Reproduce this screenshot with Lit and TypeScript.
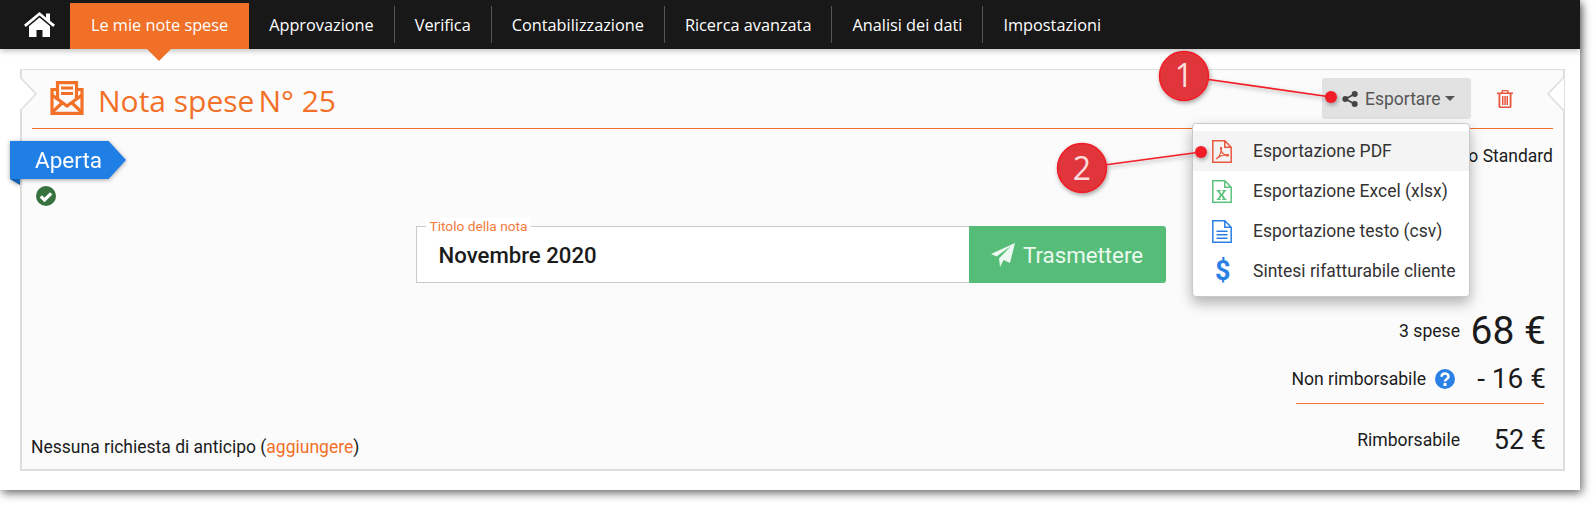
import { LitElement, html, css, svg } from 'lit';
import { customElement } from 'lit/decorators.js';

const tabs = ['Approvazione', 'Verifica', 'Contabilizzazione', 'Ricerca avanzata', 'Analisi dei dati', 'Impostazioni'];

const homeIcon = html`<svg width="31" height="26" viewBox="0 0 31 26">
  <path fill="#fff" d="M15.5 5.5 5 14.2V25h7.5v-7h6v7H26V14.2z" />
  <path fill="#fff" d="M15.5 0 0 12.8l1.8 2.1L15.5 3.6l13.700 11.300 1.800-2.100L26 8.700V1.500h-4v3.900z" />
</svg>`;

const noteIcon = html`<svg width="34" height="34" viewBox="0 0 34 34">
  <g fill="none" stroke="#f27027" stroke-width="3.200">
    <path d="M7.500 19V1.600h19V19" />
    <path d="M7 8.500H2V32.400H32V8.500H27" />
    <path d="M2 14 17 25 32 14" />
    <path d="M2 31.500 12.500 21.500M32 31.500 21.500 21.500" />
  </g>
  <path fill="#f27027" d="M11 5.500h12v3H11zM11 11h12v3H11z" />
</svg>`;

const fileIcon = (color: string, body: unknown) => html`<svg width="20" height="23" viewBox="0 0 20 23">
  <path fill="none" stroke=${color} stroke-width="1.500" d="M.8.8h12l6.400 6.400v15H.8zM12.800.8v6.400h6.400" />
  ${body}
</svg>`;

const pdfIcon = fileIcon('#e9573f', svg`<path fill="none" stroke="#e9573f" stroke-width="1.200"
  d="M4 19c3-1.500 5-6 5.500-10.500 .2-1.500-1-1.500-1-.2 0 3 3 7 7 7.500 1.500 .2 1.500-1.200 0-1.200-3.500 0-8 1.500-11.500 4.400z" />`);
const excelIcon = fileIcon('#5cc27d', svg`<path fill="#5cc27d" d="M4.500 10h4.300v1.300H7.700l1.800 2.700 1.800-2.700h-1V10h4v1.300h-1L11 15l2.500 3.700h1V20h-4.300v-1.300h1L9.500 16l-1.800 2.700h1V20h-4v-1.300h1L8 15l-2.500-3.700h-1z" />`);
const textIcon = fileIcon('#2a80e4', svg`<path fill="#2a80e4" d="M4.500 10.500h11v1.500h-11zM4.500 14h11v1.500h-11zM4.500 17.500h11V19h-11z" />`);

const shareIcon = html`<svg width="16" height="16" viewBox="0 0 16 16">
  <path fill="none" stroke="#444" stroke-width="1.800" d="M3.500 8 12.500 3M3.500 8l9 5" />
  <circle cx="3.300" cy="8" r="3" fill="#444" />
  <circle cx="12.700" cy="3" r="3" fill="#444" />
  <circle cx="12.700" cy="13" r="3" fill="#444" />
</svg>`;

const trashIcon = html`<svg width="16" height="18" viewBox="0 0 16 18">
  <path fill="#e8553a" d="M5 0h6l1 2.500h4V4h-1.500v12.500q0 1.500-1.500 1.500H3q-1.500 0-1.500-1.500V4H0V2.500h4zM6 1.300l-.5 1.200h5L10 1.300zM3.300 4v12.500h9.400V4zM5 6h1.500v9H5zM7.300 6h1.500v9H7.300zM9.500 6H11v9H9.500z" />
</svg>`;

const planeIcon = html`<svg width="24" height="24" viewBox="0 0 24 24">
  <path fill="#ecf8f0" d="M24 0 19 20l-6.500-3L9 24l-1-8.500L20 3 5.500 13.500 0 11z" />
</svg>`;

const checkIcon = html`<svg width="20" height="20" viewBox="0 0 20 20">
  <circle cx="10" cy="10" r="10" fill="#37723f" />
  <path fill="none" stroke="#fff" stroke-width="3.200" d="M4.800 10.300 8.500 14l6.700-6.700" />
</svg>`;

const helpIcon = html`<svg width="20" height="20" viewBox="0 0 20 20">
  <circle cx="10" cy="10" r="10" fill="#2a80e4" />
  <path fill="none" stroke="#fff" stroke-width="2.600" d="M6.600 7.700c0-4.300 6.900-4.300 6.900-.2 0 2.600-3.500 2.400-3.500 5" />
  <rect x="8.500" y="14" width="3" height="3" fill="#fff" />
</svg>`;

const notchLeft = html`<svg class="notch left" width="19" height="36" viewBox="0 0 19 36">
  <path fill="#fff" stroke="#dedede" stroke-width="1.500" d="M1 1 17 18 1 35" />
</svg>`;
const notchRight = html`<svg class="notch right" width="19" height="36" viewBox="0 0 19 36">
  <path fill="#fff" stroke="#dedede" stroke-width="1.500" d="M18 1 2 18 18 35" />
</svg>`;

@customElement('app-root')
export class AppRoot extends LitElement {
  render() {
    return html`
      <div class="page">
        <nav class="nav">
          <a class="home">${homeIcon}</a>
          <a class="tab active">Le mie note spese</a>
          ${tabs.map((t) => html`<a class="tab">${t}</a>`)}
        </nav>
        <main class="main">
          <section class="card">
            ${notchLeft} ${notchRight}
            <header class="head">
              <div class="title">${noteIcon}<h1>Nota spese<span class="num">N° 25</span></h1></div>
              <div class="actions">
                <button class="export">${shareIcon}<span>Esportare</span><i class="caret"></i></button>
                <span class="trash">${trashIcon}</span>
              </div>
            </header>
            <div class="ribbon"><span>Aperta</span></div>
            <span class="status">${checkIcon}</span>
            <ul class="menu">
              <li class="hover"><span class="ico">${pdfIcon}</span>Esportazione PDF</li>
              <li><span class="ico">${excelIcon}</span>Esportazione Excel (xlsx)</li>
              <li><span class="ico">${textIcon}</span>Esportazione testo (csv)</li>
              <li><span class="ico dollar">$</span>Sintesi rifatturabile cliente</li>
            </ul>
            <div class="body">
              <div class="kind">o Standard</div>
              <div class="form">
                <div class="field">
                  <label>Titolo della nota</label>
                  <span class="value">Novembre 2020</span>
                </div>
                <button class="send">${planeIcon}Trasmettere</button>
              </div>
              <div class="bottom">
                <div class="advance">Nessuna richiesta di anticipo (<a>aggiungere</a>)</div>
                <div class="totals">
                  <div class="row r1"><span>3 spese</span><b>68 €</b></div>
                  <div class="row r2"><span class="with-help">Non rimborsabile ${helpIcon}</span><b>- 16 €</b></div>
                  <div class="rule"></div>
                  <div class="row r3"><span>Rimborsabile</span><b>52 €</b></div>
                </div>
              </div>
            </div>
          </section>
        </main>
        <svg class="notes" width="1595" height="505" viewBox="0 0 1595 505">
          <defs>
            <filter id="soft" x="-30%" y="-30%" width="160%" height="160%">
              <feDropShadow dx="1" dy="2" stdDeviation="2" flood-color="#000" flood-opacity=".35" />
            </filter>
          </defs>
          <g filter="url(#soft)">
            <path d="M1184 76 1331 97M1082 168 1201 152" stroke="#f01f26" stroke-width="1.600" fill="none" />
            <circle cx="1331" cy="97" r="6" fill="#f01f26" />
            <circle cx="1201" cy="152" r="6" fill="#f01f26" />
            <circle cx="1184" cy="76" r="24.500" fill="#e0343a" stroke="#f01f26" stroke-width="1.500" />
            <circle cx="1082" cy="168" r="24.500" fill="#e0343a" stroke="#f01f26" stroke-width="1.500" />
          </g>
          <text x="1184" y="87" class="n">1</text>
          <text x="1082" y="180" class="n">2</text>
        </svg>
      </div>
    `;
  }

  static styles = css`
    :host {
      display: block;
      width: 1595px;
      height: 505px;
      overflow: hidden;
      background: #fff;
      font-family: Roboto, sans-serif;
      color: #1b1b1b;
    }
    .page {
      position: relative;
      width: 1580px;
      height: 490px;
      background: #fff;
      box-shadow: 2px 3px 9px rgba(0, 0, 0, 0.6);
      display: flex;
      flex-direction: column;
    }
    .notes {
      position: absolute;
      left: 0;
      top: 0;
      z-index: 3;
      pointer-events: none;
    }
    .n {
      font: 32px 'Open Sans', sans-serif;
      fill: #fbdcdc;
      text-anchor: middle;
    }
    .nav {
      display: flex;
      height: 49px;
      background: #181818;
      box-shadow: 0 2px 6px rgba(0, 0, 0, 0.25);
      font-family: 'Open Sans', sans-serif;
      font-size: 16.3px;
      color: #fff;
    }
    .home {
      width: 70px;
      display: flex;
      align-items: center;
      justify-content: center;
      padding-left: 9px;
      box-sizing: border-box;
    }
    .tab {
      display: flex;
      align-items: center;
      padding: 0 20px;
      margin: 6px 0;
      border-left: 1px solid #555;
    }
    .tab.active {
      position: relative;
      margin: 3px 0 0;
      padding: 0 20.500px 3px 21px;
      border: 0;
      background: #f07027;
    }
    .tab.active::after {
      content: '';
      position: absolute;
      left: 77px;
      top: 100%;
      border: 12px solid transparent;
      border-top-color: #f07027;
      border-bottom: 0;
    }
    .tab.active + .tab {
      border-left: 0;
      padding-left: 20.500px;
    }
    .main {
      flex: 1;
      display: flex;
      padding: 20px 15px 19px 20px;
      min-height: 0;
    }
    .card {
      position: relative;
      flex: 1;
      display: flex;
      flex-direction: column;
      box-sizing: border-box;
      background: #fbfbfb;
      border: 1px solid #dedede;
      border-width: 1px 2px 2px 2px;
      padding: 0 10px;
    }
    .notch {
      position: absolute;
      top: 6px;
    }
    .notch.left {
      left: -3px;
    }
    .notch.right {
      right: -2px;
    }
    .head {
      height: 58px;
      flex: none;
      display: flex;
      justify-content: space-between;
      border-bottom: 1px solid #f27027;
    }
    .title {
      display: flex;
      align-items: flex-start;
      padding: 11px 0 0 18px;
      gap: 14px;
    }
    h1 {
      margin: -2px 0 0;
      font: 400 30px/44px 'Open Sans', sans-serif;
      color: #f27027;
    }
    .num {
      margin-left: 4px;
    }
    .actions {
      display: flex;
      align-items: flex-start;
      padding-top: 8px;
    }
    .export {
      width: 149px;
      height: 41px;
      display: flex;
      align-items: center;
      gap: 7px;
      padding: 0 0 0 20px;
      border: 0;
      border-radius: 3px;
      background: #e2e2e2;
      color: #555;
      font: 17.500px Roboto, sans-serif;
    }
    .caret {
      margin-left: -2px;
      border: 5px solid transparent;
      border-top-color: #555;
      border-bottom: 0;
    }
    .trash {
      margin: 12px 40px 0 26px;
    }
    .ribbon {
      position: absolute;
      left: -12px;
      top: 71px;
      width: 116px;
      height: 38px;
      filter: drop-shadow(0 1px 2px rgba(0, 0, 0, 0.35));
    }
    .ribbon span {
      display: block;
      height: 100%;
      padding-left: 25px;
      font-size: 22.500px;
      line-height: 38px;
      color: #fff;
      background: #1f7fe5;
      clip-path: polygon(0 0, 85% 0, 100% 50%, 85% 100%, 0 100%);
    }
    .ribbon::after {
      content: '';
      position: absolute;
      left: 0;
      top: 100%;
      border-top: 6px solid #135fb0;
      border-left: 10px solid transparent;
    }
    .status {
      position: absolute;
      left: 14px;
      top: 116px;
      line-height: 0;
    }
    .menu {
      position: absolute;
      left: 1170px;
      top: 53px;
      width: 278px;
      height: 174px;
      box-sizing: border-box;
      margin: 0;
      padding: 7px 0;
      list-style: none;
      background: #fff;
      border: 1px solid #c9c9c9;
      border-radius: 4px;
      box-shadow: 0 6px 14px rgba(0, 0, 0, 0.3);
      font-size: 17.500px;
      color: #333;
      z-index: 2;
    }
    .menu li {
      display: flex;
      align-items: center;
      height: 40px;
      white-space: nowrap;
    }
    .menu li.hover {
      background: #f4f4f4;
    }
    .ico {
      display: flex;
      line-height: 0;
      width: 21px;
      margin: 0 20px 0 19px;
    }
    .dollar {
      font-size: 27px;
      font-weight: 700;
      color: #2a80e4;
      line-height: 1;
      padding-left: 3px;
      box-sizing: border-box;
    }
    .body {
      flex: 1;
      display: flex;
      flex-direction: column;
      min-height: 0;
    }
    .kind {
      margin-top: 17px;
      text-align: right;
      font-size: 17.500px;
      line-height: 20px;
    }
    .form {
      display: flex;
      align-self: center;
      margin: 60px 4px 0 0;
      height: 57px;
    }
    .field {
      position: relative;
      width: 553px;
      box-sizing: border-box;
      display: flex;
      align-items: center;
      padding-left: 22px;
      background: #fff;
      border: 1px solid #c9c9c9;
      border-right: 0;
    }
    .field label {
      position: absolute;
      left: 9px;
      top: -9px;
      padding: 0 4px;
      background: #fff;
      font-size: 13.700px;
      line-height: 16px;
      color: #f47a3a;
    }
    .value {
      font-size: 22.200px;
      font-weight: 500;
    }
    .send {
      width: 197px;
      display: flex;
      align-items: center;
      justify-content: center;
      gap: 8px;
      border: 0;
      border-radius: 0 3px 3px 0;
      background: #55bd78;
      color: #ecf8f0;
      font: 22.300px Roboto, sans-serif;
    }
    .bottom {
      flex: 1;
      display: flex;
      justify-content: space-between;
      align-items: flex-end;
      padding-bottom: 13px;
    }
    .advance {
      margin: 0 0 -1px -1px;
      font-size: 17.500px;
      line-height: 20px;
    }
    .advance a {
      color: #f27027;
    }
    .totals {
      width: 276px;
      padding-right: 7px;
      box-sizing: border-box;
      font-size: 17.600px;
    }
    .row {
      display: flex;
      justify-content: flex-end;
      align-items: center;
    }
    .row b {
      width: 86px;
      font-weight: 400;
      text-align: right;
      white-space: nowrap;
    }
    .r1 b {
      font-size: 39px;
    }
    .r2 {
      margin-top: 8px;
    }
    .r2 b {
      font-size: 28px;
    }
    .r3 {
      margin-top: 20px;
    }
    .r3 b {
      font-size: 27px;
    }
    .rule {
      height: 1px;
      margin: 8px 2px 0 auto;
      width: 248px;
      background: #f27027;
    }
    .with-help {
      display: flex;
      align-items: center;
      gap: 9px;
      margin-right: 5px;
    }
  `;
}
